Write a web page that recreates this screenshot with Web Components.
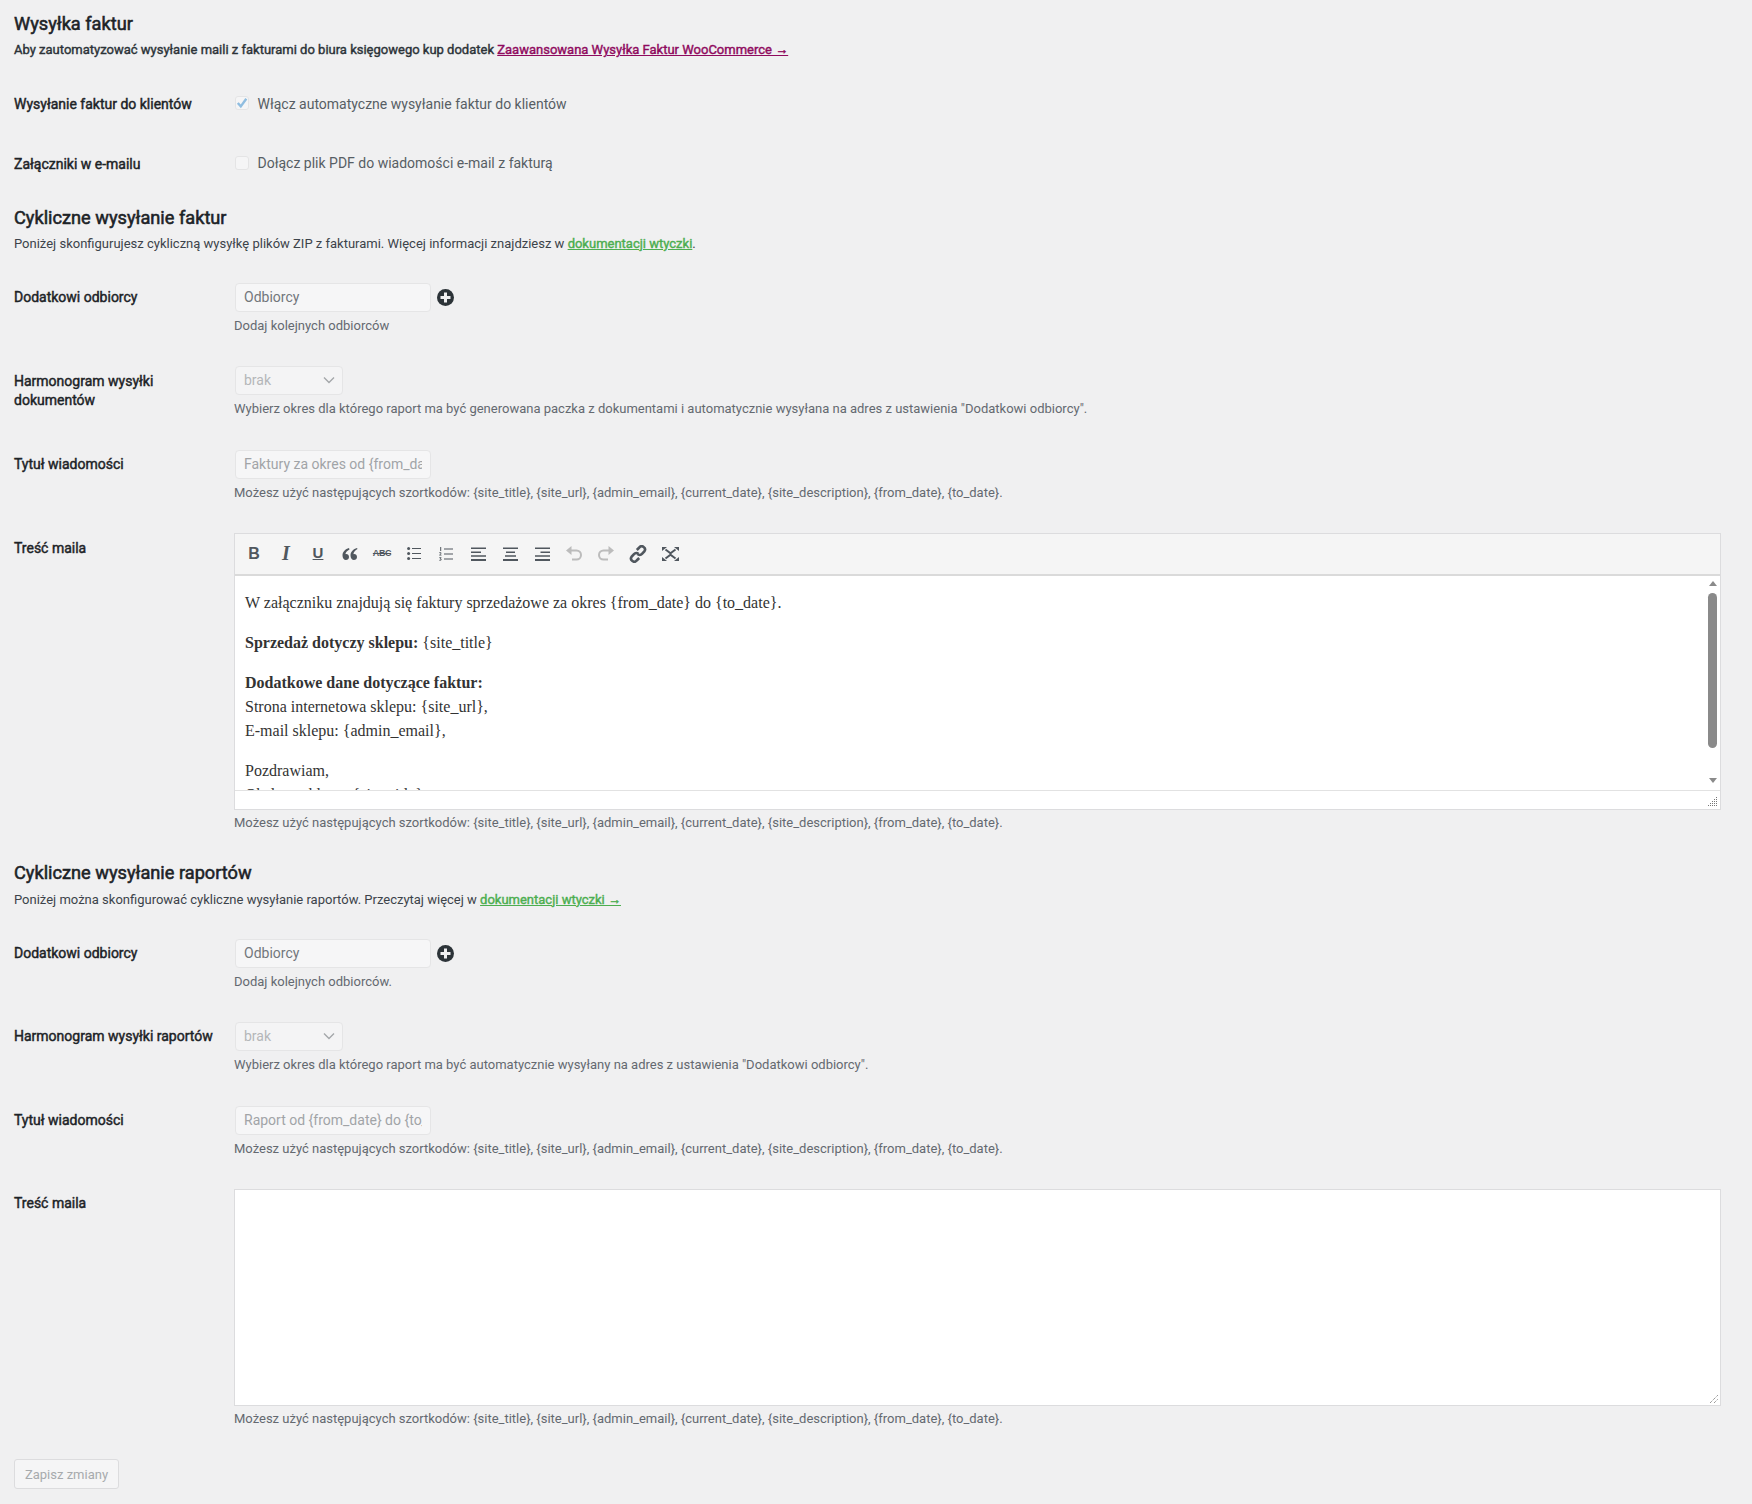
<!DOCTYPE html>
<html lang="pl">
<head>
<meta charset="utf-8">
<title>Wysyłka faktur</title>
<style>
  html, body { margin: 0; background: #f0f0f1; }
  body { font: 13px/19.5px Roboto, sans-serif; color: #3c434a; min-height: 1504px; box-sizing: border-box; }
</style>
</head>
<body>
<wf-settings-page>
  <wf-section-head title="Wysyłka faktur" strong>
    Aby zautomatyzować wysyłanie maili z fakturami do biura księgowego kup dodatek
    <wf-link color="#8f0a5e">Zaawansowana Wysyłka Faktur WooCommerce →</wf-link>
  </wf-section-head>
  <wf-row label="Wysyłanie faktur do klientów" compact>
    <wf-check checked>Włącz automatyczne wysyłanie faktur do klientów</wf-check>
  </wf-row>
  <wf-row label="Załączniki w e-mailu" compact>
    <wf-check>Dołącz plik PDF do wiadomości e-mail z fakturą</wf-check>
  </wf-row>

  <wf-section-head title="Cykliczne wysyłanie faktur">
    Poniżej skonfigurujesz cykliczną wysyłkę plików ZIP z fakturami. Więcej informacji znajdziesz w
    <wf-link color="#4cae50">dokumentacji wtyczki</wf-link>.
  </wf-section-head>
  <wf-row label="Dodatkowi odbiorcy">
    <wf-input adder>Odbiorcy</wf-input>
    <wf-hint>Dodaj kolejnych odbiorców</wf-hint>
  </wf-row>
  <wf-row label="Harmonogram wysyłki dokumentów">
    <wf-select>brak</wf-select>
    <wf-hint>Wybierz okres dla którego raport ma być generowana paczka z dokumentami i automatycznie wysyłana na adres z ustawienia "Dodatkowi odbiorcy".</wf-hint>
  </wf-row>
  <wf-row label="Tytuł wiadomości">
    <wf-input muted>Faktury za okres od {from_date} do {to_date}</wf-input>
    <wf-hint>Możesz użyć następujących szortkodów: {site_title}, {site_url}, {admin_email}, {current_date}, {site_description}, {from_date}, {to_date}.</wf-hint>
  </wf-row>
  <wf-row label="Treść maila">
    <wf-editor>
      <p>W załączniku znajdują się faktury sprzedażowe za okres {from_date} do {to_date}.</p>
      <p><b>Sprzedaż dotyczy sklepu:</b> {site_title}</p>
      <p><b>Dodatkowe dane dotyczące faktur:</b><br>Strona internetowa sklepu: {site_url},<br>E-mail sklepu: {admin_email},</p>
      <p>Pozdrawiam,<br>Obsługa sklepu: {site_title}</p>
    </wf-editor>
    <wf-hint wide>Możesz użyć następujących szortkodów: {site_title}, {site_url}, {admin_email}, {current_date}, {site_description}, {from_date}, {to_date}.</wf-hint>
  </wf-row>

  <wf-section-head title="Cykliczne wysyłanie raportów">
    Poniżej można skonfigurować cykliczne wysyłanie raportów. Przeczytaj więcej w
    <wf-link color="#4cae50">dokumentacji wtyczki →</wf-link>
  </wf-section-head>
  <wf-row label="Dodatkowi odbiorcy">
    <wf-input adder>Odbiorcy</wf-input>
    <wf-hint>Dodaj kolejnych odbiorców.</wf-hint>
  </wf-row>
  <wf-row label="Harmonogram wysyłki raportów">
    <wf-select>brak</wf-select>
    <wf-hint>Wybierz okres dla którego raport ma być automatycznie wysyłany na adres z ustawienia "Dodatkowi odbiorcy".</wf-hint>
  </wf-row>
  <wf-row label="Tytuł wiadomości">
    <wf-input muted>Raport od {from_date} do {to_date}</wf-input>
    <wf-hint>Możesz użyć następujących szortkodów: {site_title}, {site_url}, {admin_email}, {current_date}, {site_description}, {from_date}, {to_date}.</wf-hint>
  </wf-row>
  <wf-row label="Treść maila">
    <wf-textarea></wf-textarea>
    <wf-hint wide>Możesz użyć następujących szortkodów: {site_title}, {site_url}, {admin_email}, {current_date}, {site_description}, {from_date}, {to_date}.</wf-hint>
  </wf-row>
  <wf-save-button>Zapisz zmiany</wf-save-button>
</wf-settings-page>

<script>
class WfSettingsPage extends HTMLElement {
  connectedCallback() {
    this.attachShadow({ mode: 'open' });
    this.shadowRoot.innerHTML = `
      <style>
        :host { display: block; padding: 12.1px 31px 0 14px; }
      </style>
      <slot></slot>
    `;
  }
}

class WfSectionHead extends HTMLElement {
  connectedCallback() {
    const title = this.getAttribute('title');
    this.removeAttribute('title');
    this.attachShadow({ mode: 'open' });
    this.shadowRoot.innerHTML = `
      <style>
        :host { display: block; margin-top: 12px; margin-bottom: 14px; }
        :host(:first-child) { margin-top: 0; margin-bottom: 14.4px; }
        h2 { margin: 0 0 4.7px; font: 400 18.2px/23.66px Roboto, sans-serif; color: #1d2327; -webkit-text-stroke: .55px currentColor; }
        p { margin: 0; font-size: 13px; line-height: 19.5px; color: #3c434a; }
        :host([strong]) p { color: #2c3338; -webkit-text-stroke: .4px currentColor; }
      </style>
      <h2>${title}</h2>
      <p><slot></slot></p>
    `;
  }
}

class WfLink extends HTMLElement {
  connectedCallback() {
    this.attachShadow({ mode: 'open' });
    this.shadowRoot.innerHTML = `<style>:host { display: inline; color: ${this.getAttribute('color')}; text-decoration: underline; -webkit-text-stroke: .4px currentColor; }</style><slot></slot>`;
  }
}

class WfRow extends HTMLElement {
  connectedCallback() {
    this.attachShadow({ mode: 'open' });
    this.shadowRoot.innerHTML = `
      <style>
        :host { display: grid; grid-template-columns: 220px 1fr; }
        .label { padding: 20.7px 10px 0 0; font: 400 14px/19.5px Roboto, sans-serif; color: #1d2327; -webkit-text-stroke: .45px currentColor; }
        .field { padding: 15px 0 15.5px; min-width: 0; }
        :host([compact]) .field { padding: 18.8px 0 20.8px; height: 20px; }
      </style>
      <div class="label">${this.getAttribute('label')}</div>
      <div class="field"><slot></slot></div>
    `;
  }
}

class WfCheck extends HTMLElement {
  connectedCallback() {
    this.attachShadow({ mode: 'open' });
    this.shadowRoot.innerHTML = `
      <style>
        :host { display: flex; align-items: center; gap: 8.5px; margin-left: 1px; font-size: 14px; line-height: 20px; color: #575e64; }
        .box { width: 14px; height: 14px; flex: none; box-sizing: border-box; border: 1px solid #e4e4e5; border-radius: 3px; background: #f5f5f6; position: relative; }
        .text { position: relative; top: .4px; }
        svg { display: none; position: absolute; left: 0; top: 0; }
        :host([checked]) svg { display: block; }
      </style>
      <span class="box">
        <svg width="12" height="12" viewBox="0 0 12 12"><path d="M1.800 6 4.800 9.400 10.300 1.800" fill="none" stroke="#8fbde0" stroke-width="2.400"/></svg>
      </span>
      <span class="text"><slot></slot></span>
    `;
  }
}

class WfInput extends HTMLElement {
  connectedCallback() {
    this.attachShadow({ mode: 'open' });
    this.shadowRoot.innerHTML = `
      <style>
        :host { display: flex; align-items: center; gap: 6px; margin-left: 1px; height: 30px; }
        .box { width: 196px; height: 29px; box-sizing: border-box; padding: 0 8px; border: 1px solid #e5e5e6; border-radius: 4px; background: #f6f6f7; font-size: 14px; line-height: 27px; color: #72777c; }
        .text { display: block; overflow: hidden; white-space: nowrap; }
        :host([muted]) .box { color: #a1a4a7; }
        svg { display: none; flex: none; }
        :host([adder]) svg { display: block; }
      </style>
      <div class="box"><span class="text"><slot></slot></span></div>
      <svg width="17" height="17" viewBox="0 0 17 17">
        <circle cx="8.500" cy="8.500" r="8.500" fill="#2c3338"/>
        <path d="M7 3.500h3v3.500h3.500v3H10v3.500H7V10H3.500V7H7z" fill="#f0f0f1"/>
      </svg>
    `;
  }
}

class WfSelect extends HTMLElement {
  connectedCallback() {
    this.attachShadow({ mode: 'open' });
    this.shadowRoot.innerHTML = `
      <style>
        :host { display: block; margin-left: 1px; height: 30px; }
        .box { width: 108px; height: 29px; box-sizing: border-box; padding: 0 8px; border: 1px solid #e5e5e6; border-radius: 4px; background: #f4f4f5; display: flex; align-items: center; justify-content: space-between; font-size: 14px; color: #b4b7b9; }
        span { position: relative; top: .5px; }
        svg { margin-right: -1px; }
      </style>
      <div class="box">
        <span><slot></slot></span>
        <svg width="12" height="8" viewBox="0 0 12 8"><path d="M1 1.500 6 6.500 11 1.500" fill="none" stroke="#a4a7aa" stroke-width="1.400"/></svg>
      </div>
    `;
  }
}

class WfHint extends HTMLElement {
  connectedCallback() {
    this.attachShadow({ mode: 'open' });
    this.shadowRoot.innerHTML = `
      <style>
        :host { display: block; margin-top: 3.5px; font-size: 13px; line-height: 19.5px; color: #646970; white-space: nowrap; }
        :host([wide]) { margin-bottom: .8px; }
      </style>
      <slot></slot>
    `;
  }
}

class WfToolButton extends HTMLElement {
  connectedCallback() {
    this.attachShadow({ mode: 'open' });
    this.shadowRoot.innerHTML = `
      <style>
        :host { display: grid; place-items: center; width: 32px; height: 40px; color: #50575e; }
        :host([off]) { color: #bcbcbc; }
      </style>
      <slot></slot>
    `;
  }
}

class WfEditor extends HTMLElement {
  connectedCallback() {
    this.attachShadow({ mode: 'open' });
    this.shadowRoot.innerHTML = `
      <style>
        :host { display: block; box-sizing: border-box; height: 277px; border: 1px solid #dcdcde; background: #fff; position: relative; }
        .bar { display: flex; height: 40px; padding-left: 3px; background: #f5f5f5; border-bottom: 2px solid #dadada; }
        .g { font-family: "Liberation Sans", sans-serif; line-height: 1; }
        .body { height: 215px; overflow: hidden; padding: 15px 0 0 10px; box-sizing: border-box; font: 16px/24px "Liberation Serif", serif; color: #333; border-bottom: 1px solid #e2e2e2; }
        .status { height: 18px; position: relative; }
        ::slotted(p) { margin: 0 0 16px; }
        .thumb { position: absolute; right: 3px; top: 59px; width: 9px; height: 155px; border-radius: 5px; background: #8a8a8a; }
        .arrow { position: absolute; right: 3px; width: 0; height: 0; border: 4.500px solid transparent; }
        .up { top: 47px; border-top: 0; border-bottom: 5px solid #8a8a8a; }
        .down { top: 244px; border-bottom: 0; border-top: 5px solid #8a8a8a; }
        .grip { position: absolute; right: 2px; bottom: 2px; }
      </style>
      <div class="bar">
        <wf-tool-button><span class="g" style="font-weight:700;font-size:16px">B</span></wf-tool-button>
        <wf-tool-button><span class="g" style="font:italic 700 20px 'Liberation Serif',serif">I</span></wf-tool-button>
        <wf-tool-button><span class="g" style="font-weight:700;font-size:15px;text-decoration:underline;text-underline-offset:1px;position:relative;top:-1px">U</span></wf-tool-button>
        <wf-tool-button><svg width="16" height="12" viewBox="0 0 16 12" fill="currentColor"><path d="M7 0C3.500 1 .5 3.500 .5 7.500c0 2.600 1.500 4.500 3.400 4.500 1.800 0 3.100-1.300 3.100-3 0-1.700-1.200-2.900-2.800-2.900-.3 0-.6 0-.8.100C3.700 4.300 5.300 2.700 7.500 1.500zM15 0c-3.500 1-6.500 3.500-6.500 7.500 0 2.600 1.500 4.500 3.400 4.500 1.800 0 3.100-1.300 3.100-3 0-1.700-1.200-2.900-2.800-2.900-.3 0-.6 0-.8.100.3-2.400 1.900-4 4.100-5.200z"/></svg></wf-tool-button>
        <wf-tool-button><span class="g" style="font-size:9px;font-weight:700;letter-spacing:-.4px;text-decoration:line-through">ABC</span></wf-tool-button>
        <wf-tool-button><svg width="14" height="13" viewBox="0 0 14 13" fill="currentColor"><circle cx="1.600" cy="1.500" r="1.500"/><circle cx="1.600" cy="6.500" r="1.500"/><circle cx="1.600" cy="11.500" r="1.500"/><path d="M5 1h9v1H5zM5 6h9v1H5zM5 11h9v1H5z"/></svg></wf-tool-button>
        <wf-tool-button><svg width="14" height="14" viewBox="0 0 14 14" fill="currentColor"><path d="M1 .3 2.200 0v4h-1V1zM.2 5.500c.9-.6 2.300-.3 2.200.8 0 .7-.7 1.100-1.200 1.500h1.300v.7H.2v-.6c.6-.6 1.300-1 1.300-1.500 0-.5-.8-.4-1.300 0zM.3 10.200h2.100v.5l-.8.9c.6.100 1 .4 1 1 0 1-1.500 1.300-2.300.8v-.7c.6.400 1.400.4 1.400-.1 0-.4-.5-.5-1-.4v-.5l.8-.8H.3zM5 1.500h9v1H5zM5 6.500h9v1H5zM5 11.500h9v1H5z"/></svg></wf-tool-button>
        <wf-tool-button><svg width="15" height="14" viewBox="0 0 15 14" fill="currentColor"><path d="M0 .5h15v1.600H0zM0 4.400h10V6H0zM0 8.200h15v1.600H0zM0 12h15v2H0z"/></svg></wf-tool-button>
        <wf-tool-button><svg width="15" height="14" viewBox="0 0 15 14" fill="currentColor"><path d="M0 .5h15v1.600H0zM3 4.400h9V6H3zM2 8.200h11v1.600H2zM0 12h15v2H0z"/></svg></wf-tool-button>
        <wf-tool-button><svg width="15" height="14" viewBox="0 0 15 14" fill="currentColor"><path d="M0 .5h15v1.600H0zM5.500 4.400H15V6H5.500zM0 8.200h15v1.600H0zM0 12h15v2H0z"/></svg></wf-tool-button>
        <wf-tool-button off><svg width="16" height="15" viewBox="0 0 16 15"><path d="M3 4.500h7.500a4.500 4.500 0 0 1 0 9H6" fill="none" stroke="currentColor" stroke-width="2"/><path d="M5.500 0v9L0 4.500z" fill="currentColor"/></svg></wf-tool-button>
        <wf-tool-button off><svg width="16" height="15" viewBox="0 0 16 15"><path d="M13 4.500H5.500a4.500 4.500 0 0 0 0 9H10" fill="none" stroke="currentColor" stroke-width="2"/><path d="M10.500 0v9L16 4.500z" fill="currentColor"/></svg></wf-tool-button>
        <wf-tool-button><svg width="18" height="18" viewBox="0 0 18 18" fill="none" stroke="currentColor" stroke-width="2.600"><path d="M7.800 5 10.300 2.500a3.200 3.200 0 0 1 5.200 3.700L13 8.900a3.200 3.200 0 0 1-4.500.2"/><path d="M10.200 13 7.700 15.500a3.200 3.200 0 0 1-5.200-3.700L5 9.100a3.200 3.200 0 0 1 4.500-.2"/></svg></wf-tool-button>
        <wf-tool-button><svg width="17" height="14" viewBox="0 0 17 14"><path d="M3.500 2.500 8.500 6.200 13.500 2.500M3.500 11.500 8.500 7.800 13.500 11.500M8.500 6.200V7.800" fill="none" stroke="currentColor" stroke-width="2"/><path d="M0 0h5L0 4zM17 0h-5l5 4zM0 14h5L0 10zM17 14h-5l5-4z" fill="currentColor"/></svg></wf-tool-button>
      </div>
      <div class="body"><slot></slot></div>
      <div class="status">
        <svg class="grip" width="10" height="10" viewBox="0 0 10 10" fill="#777"><path d="M8 0h1v1H8zM8 2h1v1H8zM6 2h1v1H6zM8 4h1v1H8zM6 4h1v1H6zM4 4h1v1H4zM8 6h1v1H8zM6 6h1v1H6zM4 6h1v1H4zM2 6h1v1H2zM8 8h1v1H8zM6 8h1v1H6zM4 8h1v1H4zM2 8h1v1H2zM0 8h1v1H0z"/></svg>
      </div>
      <div class="arrow up"></div>
      <div class="thumb"></div>
      <div class="arrow down"></div>
    `;
  }
}

class WfTextarea extends HTMLElement {
  connectedCallback() {
    this.attachShadow({ mode: 'open' });
    this.shadowRoot.innerHTML = `
      <style>
        :host { display: block; box-sizing: border-box; height: 217px; border: 1px solid #dcdcde; background: #fff; position: relative; }
        svg { position: absolute; right: 1px; bottom: 1px; }
      </style>
      <svg width="9" height="9" viewBox="0 0 9 9" fill="none" stroke="#6f6f6f" stroke-dasharray="1 1"><path d="M0 8 8 0M4 8 8 4"/></svg>
    `;
  }
}

class WfSaveButton extends HTMLElement {
  connectedCallback() {
    this.attachShadow({ mode: 'open' });
    this.shadowRoot.innerHTML = `
      <style>
        :host { display: block; margin-top: 14.7px; }
        button { display: block; width: 105px; height: 30px; padding: 0; box-sizing: border-box; border: 1px solid #dcdcde; border-radius: 3px; background: #f5f5f6; font: 13px Roboto, sans-serif; color: #a7aaad; }
      </style>
      <button type="button"><slot></slot></button>
    `;
  }
}

customElements.define('wf-settings-page', WfSettingsPage);
customElements.define('wf-section-head', WfSectionHead);
customElements.define('wf-link', WfLink);
customElements.define('wf-row', WfRow);
customElements.define('wf-check', WfCheck);
customElements.define('wf-input', WfInput);
customElements.define('wf-select', WfSelect);
customElements.define('wf-hint', WfHint);
customElements.define('wf-tool-button', WfToolButton);
customElements.define('wf-editor', WfEditor);
customElements.define('wf-textarea', WfTextarea);
customElements.define('wf-save-button', WfSaveButton);
</script>
</body>
</html>
